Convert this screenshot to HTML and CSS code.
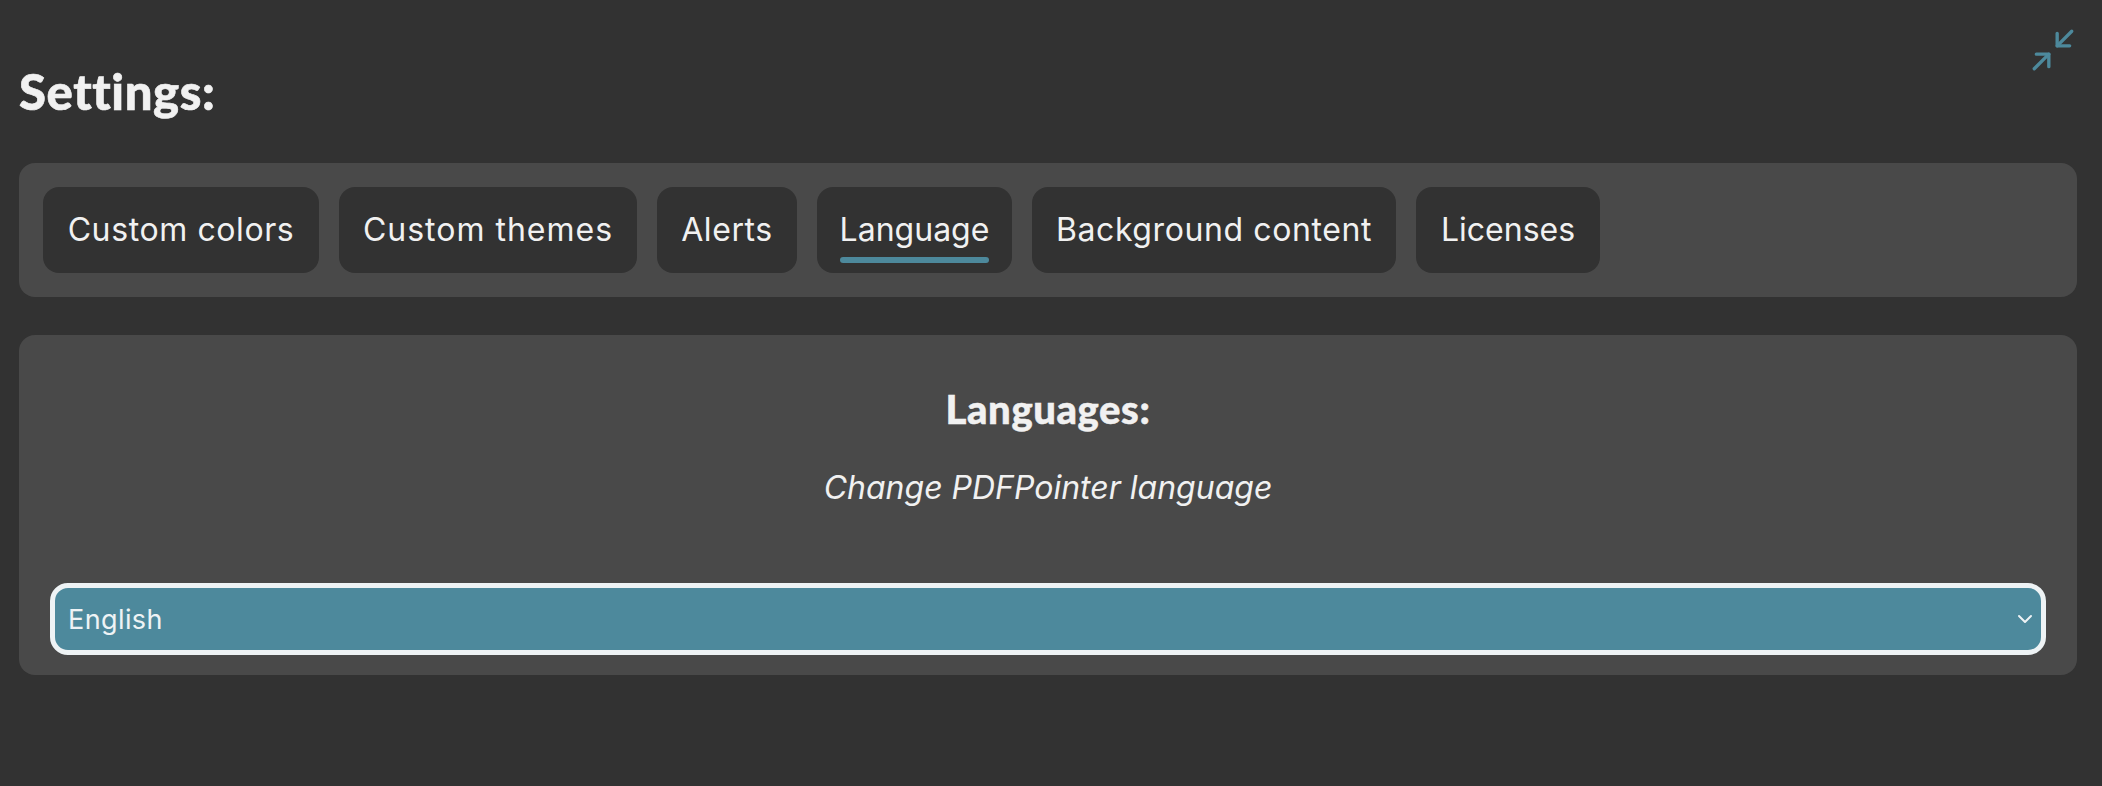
FILE: index.html
```html
<!DOCTYPE html>
<html lang="en">
<head>
  <meta charset="UTF-8" />
  <title>Settings</title>
  <link rel="stylesheet" href="styles.css">
</head>
<body>

  <button class="minimize" aria-label="Minimize">
    <svg viewBox="0 0 24 24" width="50" height="50" fill="none" stroke="currentColor" stroke-width="1.6" stroke-linecap="round" stroke-linejoin="round">
      <polyline points="4 14 10 14 10 20" />
      <polyline points="20 10 14 10 14 4" />
      <line x1="14" y1="10" x2="21" y2="3" />
      <line x1="3" y1="21" x2="10" y2="14" />
    </svg>
  </button>

  <h1 class="title">Settings:</h1>

  <div class="panel tabs">
    <button class="tab">Custom colors</button>
    <button class="tab wide">Custom themes</button>
    <button class="tab">Alerts</button>
    <button class="tab tight active"><span>Language</span></button>
    <button class="tab">Background content</button>
    <button class="tab tight">Licenses</button>
  </div>

  <div class="panel content">
    <h2 class="content-title">Languages:</h2>
    <p class="content-desc">Change PDFPointer language</p>
    <div class="select-box">
      <select class="language">
        <option>English</option>
      </select>
      <svg class="chevron" viewBox="0 0 16 10" width="16" height="10" fill="none" stroke="currentColor" stroke-width="2" stroke-linecap="round" stroke-linejoin="round">
        <polyline points="2 2 8 8 14 2" />
      </svg>
    </div>
  </div>

</body>
</html>
```

FILE: styles.css
```css
* {
  box-sizing: border-box;
}

body {
  margin: 0;
  padding: 0 25px 0 19px;
  height: 786px;
  overflow: hidden;
  background: #323232;
  color: #f1f1f1;
  font-family: 'Inter', sans-serif;
}

.minimize {
  position: absolute;
  top: 25px;
  right: 24px;
  padding: 0;
  border: none;
  background: none;
  color: #4d899c;
}

.minimize svg {
  display: block;
}

.title {
  margin: 0;
  padding-top: 63px;
  height: 163px;
  font-family: 'Lato', sans-serif;
  font-size: 49px;
  font-weight: 900;
  letter-spacing: 0.6px;
  line-height: 56px;
  -webkit-text-stroke: 0.6px #f1f1f1;
}

.panel {
  background: #494949;
  border-radius: 16px;
}

.tabs {
  display: grid;
  grid-template-columns: 276px 298px 140px 195px 364px 184px;
  gap: 20px;
  padding: 24px;
  margin-bottom: 38px;
}

.tab {
  height: 86px;
  padding: 0;
  border: none;
  border-radius: 16px;
  background: #323232;
  color: #f1f1f1;
  font-family: 'Inter', sans-serif;
  font-size: 32px;
  letter-spacing: 0.6px;
  line-height: 40px;
  white-space: nowrap;
}

.tab.wide {
  letter-spacing: 1px;
}

.tab.tight {
  letter-spacing: 0;
}

.tab.active span {
  display: inline-block;
  position: relative;
}

.tab.active span::after {
  content: "";
  position: absolute;
  top: 47px;
  left: 0;
  right: 0;
  height: 6px;
  border-radius: 3px;
  background: #4d899c;
}

.content {
  height: 340px;
  padding: 52px 31px 0;
  text-align: center;
}

.content-title {
  margin: 0;
  font-family: 'Lato', sans-serif;
  font-size: 40px;
  font-weight: 900;
  letter-spacing: 0.6px;
  line-height: 44px;
  -webkit-text-stroke: 0.5px #f1f1f1;
}

.content-desc {
  margin: 37px 0 0;
  font-size: 32px;
  font-style: italic;
  line-height: 40px;
}

.select-box {
  position: relative;
  margin-top: 75px;
}

.language {
  display: block;
  width: 100%;
  height: 72px;
  padding: 0 13px;
  border: 5px solid #eef3f5;
  border-radius: 18px;
  appearance: none;
  background: #4d899c;
  color: #eef3f5;
  font-family: 'Inter', sans-serif;
  font-size: 27px;
  letter-spacing: 0.4px;
}

.chevron {
  position: absolute;
  top: 31px;
  right: 13px;
  color: #eef3f5;
}
```
